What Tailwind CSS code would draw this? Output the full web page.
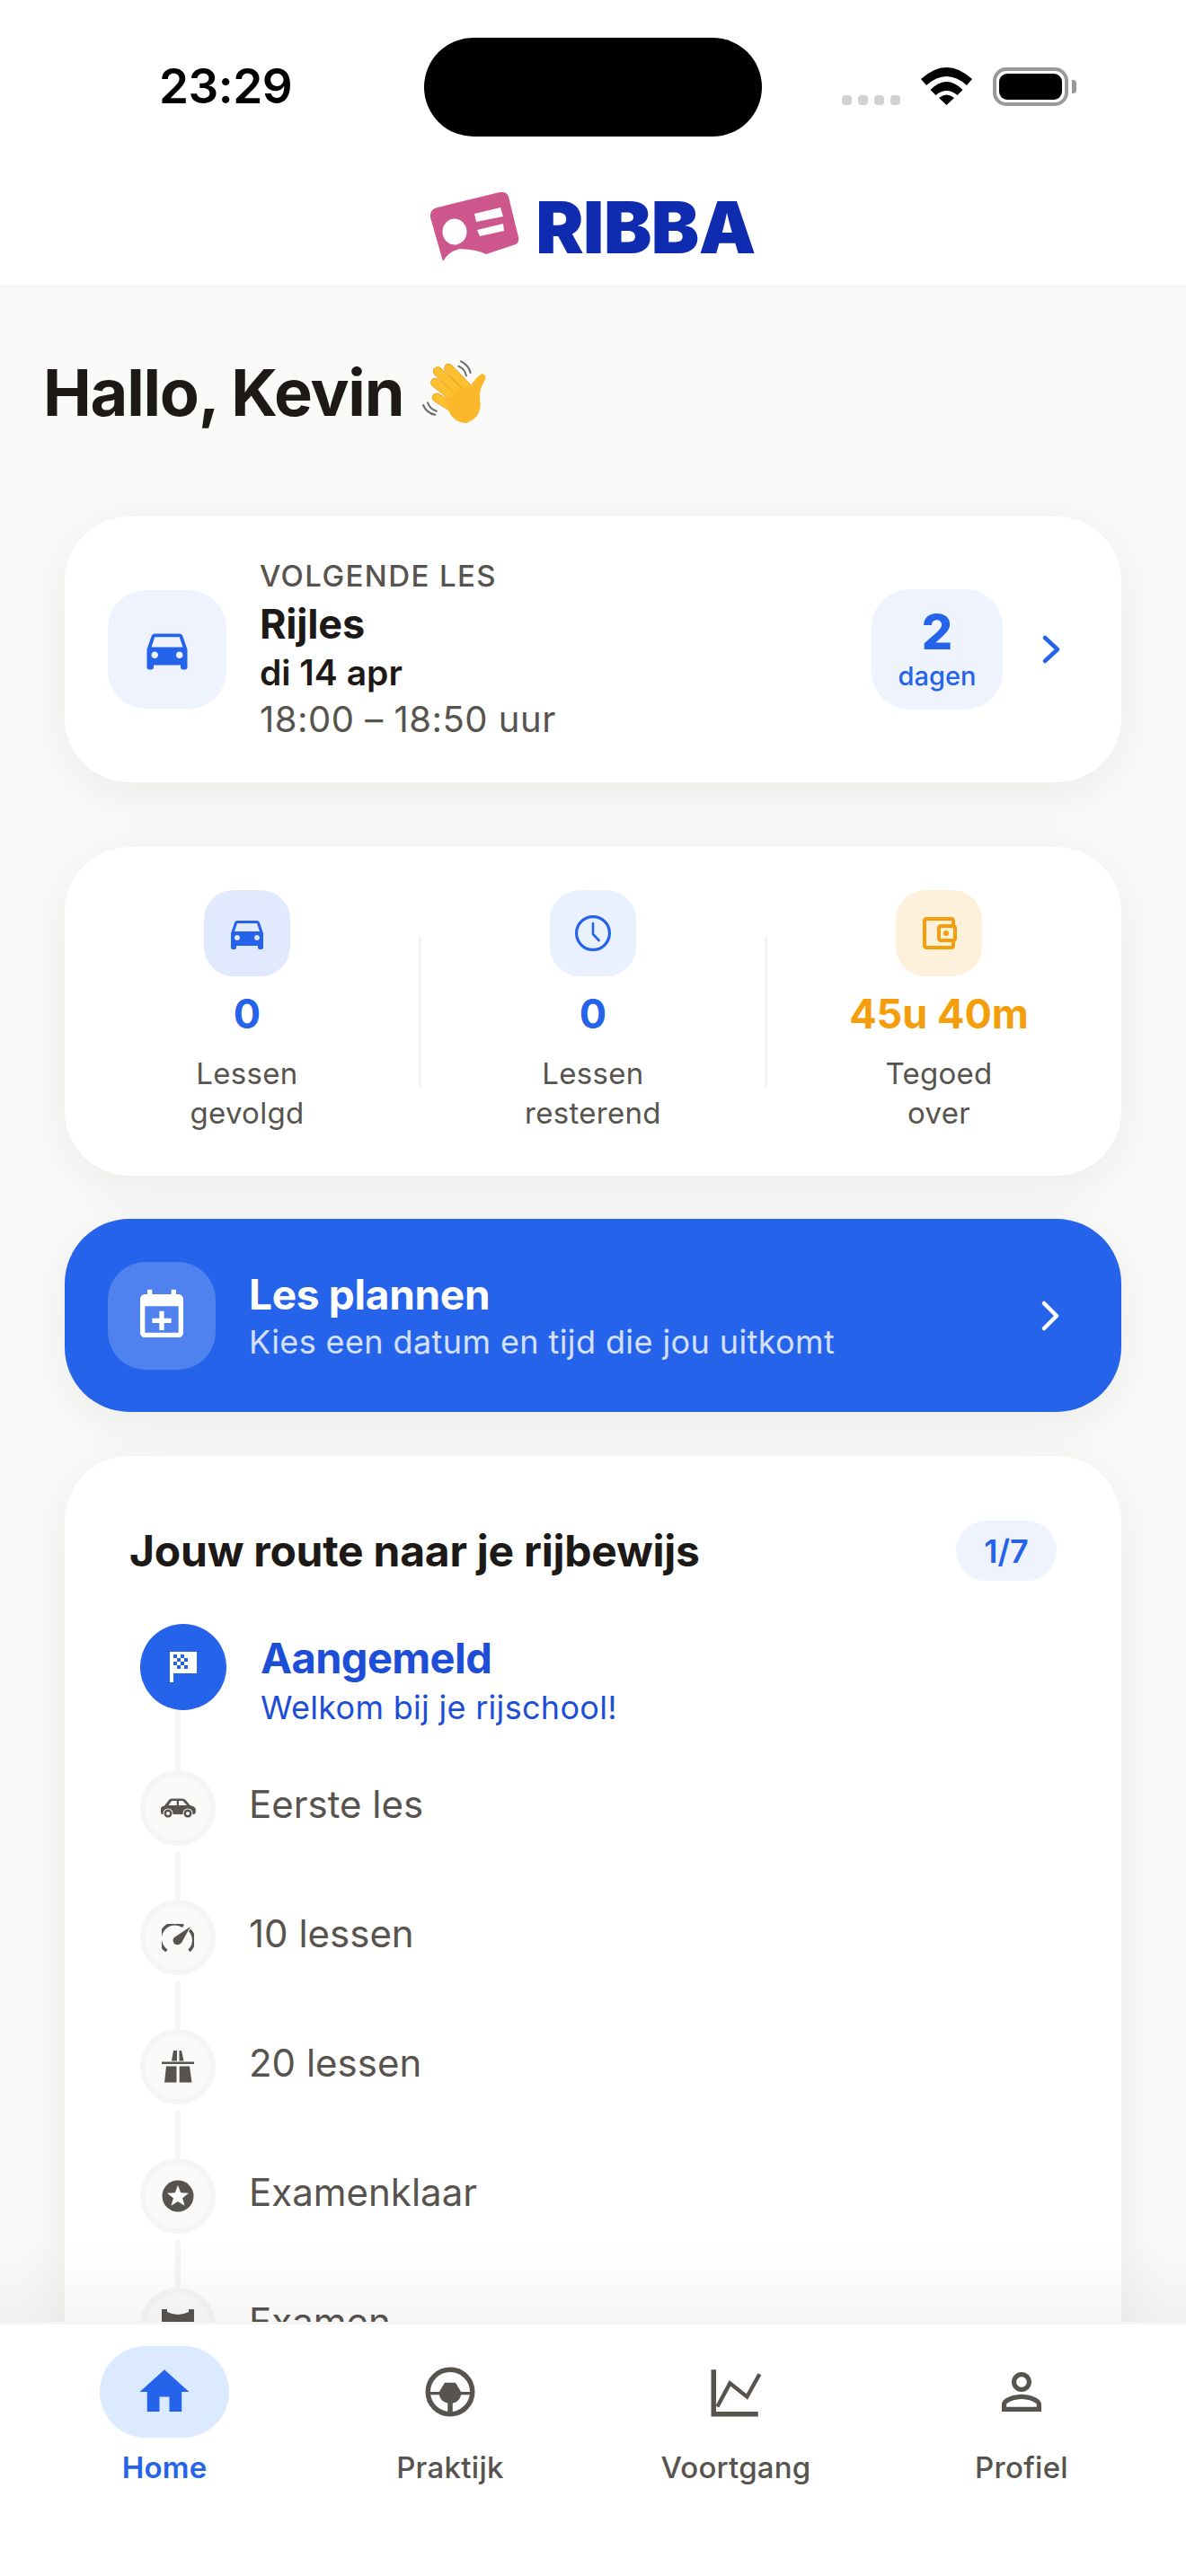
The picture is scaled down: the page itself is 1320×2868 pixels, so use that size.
<!DOCTYPE html>
<html lang="nl">
<head>
  <meta charset="UTF-8">
  <title>Ribba</title>
  <script src="https://cdn.jsdelivr.net/npm/@tailwindcss/browser@4"></script>
</head>
<body class="bg-[#fafaf9] font-['Inter',sans-serif]">
  <div class="relative w-[1320px] h-[2868px] overflow-hidden flex flex-col">

    <!-- Status bar + logo -->
    <header class="bg-white h-[320px] shrink-0 border-b-[3px] border-[#f5f5f4]">
      <div class="relative h-[194px] flex items-start">
        <span class="ml-[177px] mt-[68px] text-[53px] leading-[57px] font-semibold text-black tracking-[-0.5px]">23:29</span>
        <div class="absolute left-[472px] top-[42px] w-[376px] h-[110px] rounded-full bg-black"></div>
        <div class="absolute left-[937px] top-[106px] flex gap-[7px]">
          <i class="block w-[11px] h-[11px] rounded-[4px] bg-[#d1d1d1]"></i>
          <i class="block w-[11px] h-[11px] rounded-[4px] bg-[#d1d1d1]"></i>
          <i class="block w-[11px] h-[11px] rounded-[4px] bg-[#d1d1d1]"></i>
          <i class="block w-[11px] h-[11px] rounded-[4px] bg-[#d1d1d1]"></i>
        </div>
        <svg class="absolute left-[1025px] top-[75px]" width="57" height="42" viewBox="0 0 57 42">
          <path d="M0 13Q28.5-13 57 13L51 20Q28.5 0 6 20Z"/>
          <path d="M10.5 25Q28.5 7 46.5 25L40.5 31Q28.5 21 16.5 31Z"/>
          <path d="M20 34Q28.5 27 37 34L28.5 42Z"/>
        </svg>
        <div class="absolute left-[1105px] top-[75px] w-[84px] h-[43px] rounded-[15px] border-[4px] border-[#999] p-[3px]">
          <div class="w-full h-full rounded-[9px] bg-black"></div>
        </div>
        <div class="absolute left-[1193px] top-[89px] w-[5px] h-[15px] rounded-r-[4px] bg-[#999]"></div>
      </div>
      <div class="flex justify-center items-center gap-[18px] h-[80px] mt-[19px]">
        <svg width="99" height="78" viewBox="0 0 99 78">
          <path fill="#cd568c" d="M8 17L77 0Q85-1 87 5L98 50Q99 56 95 58L62 69Q53 64 33 63Q20 66 14 77L0 28Q-1 19 8 17Z"/>
          <ellipse cx="27" cy="44" rx="13.5" ry="14.5" fill="#fff"/>
          <path fill="#fff" d="M49 24L78 17L81 27L51 33ZM52 42L81 35L82 43L55 49Z"/>
        </svg>
        <span class="text-[80px] leading-[80px] font-black text-[#0f2bb0] tracking-[-0.5px]">RIBBA</span>
      </div>
    </header>

    <!-- Scrollable content -->
    <main class="relative flex-1 overflow-hidden">
      <div class="flex items-center mt-[73px] mb-[94px] h-[88px] ml-[48px]">
        <h1 class="text-[72px] leading-[88px] font-bold text-[#1c1917] tracking-[-1.2px]">Hallo, Kevin</h1>
        <svg class="ml-[2px] -mt-[3px]" width="110" height="90" viewBox="0 0 330 270">
          <g fill="none" stroke="#6b6b6b" stroke-width="6" stroke-linecap="round">
            <path d="M178 50Q200 60 204 82"/>
            <path d="M186 34Q212 46 218 72"/>
            <path d="M75 172Q84 195 105 200"/>
            <path d="M60 180Q72 208 100 212"/>
          </g>
          <g fill="none" stroke-linecap="round">
            <path d="M220 135L145 57" stroke="#e39a1a" stroke-width="31"/>
            <path d="M190 145L108 67" stroke="#e39a1a" stroke-width="31"/>
            <path d="M175 165L100 105" stroke="#e39a1a" stroke-width="31"/>
            <path d="M170 195L105 155" stroke="#e39a1a" stroke-width="31"/>
            <path d="M220 135L145 57" stroke="#fdc02f" stroke-width="27"/>
            <path d="M190 145L108 67" stroke="#fdc02f" stroke-width="27"/>
            <path d="M175 165L100 105" stroke="#fdc02f" stroke-width="27"/>
            <path d="M170 195L105 155" stroke="#fdc02f" stroke-width="27"/>
          </g>
          <path fill="#fbb82a" d="M135 170L180 125L215 122Q232 90 256 75Q275 80 265 100Q245 130 250 165Q258 220 205 240Q170 240 150 210Z"/>
        </svg>
      </div>

      <div class="flex flex-col px-[72px]">
        <!-- Next lesson -->
        <section class="flex items-center h-[296px] pl-[48px] pr-[65px] rounded-[72px] bg-white shadow-[0_12px_60px_rgba(0,0,0,0.065)]">
          <div class="flex items-center justify-center w-[132px] h-[132px] rounded-[42px] bg-[#eef3fe] shrink-0">
            <svg width="60" height="60" viewBox="0 0 24 24" fill="#2563eb"><path d="M18.92 6.01C18.72 5.42 18.16 5 17.5 5h-11c-.66 0-1.21.42-1.42 1.01L3 12v8c0 .55.45 1 1 1h1c.55 0 1-.45 1-1v-1h12v1c0 .55.45 1 1 1h1c.55 0 1-.45 1-1v-8l-2.08-5.99zM6.5 16c-.83 0-1.5-.67-1.5-1.5S5.67 13 6.5 13s1.5.67 1.5 1.5S7.33 16 6.5 16zm11 0c-.83 0-1.5-.67-1.5-1.5s.67-1.5 1.5-1.5 1.5.67 1.5 1.5-.67 1.5-1.5 1.5zM5 11l1.5-4.5h11L19 11H5z"/></svg>
          </div>
          <div class="flex-1 ml-[37px]">
            <p class="text-[33px] leading-[42px] font-medium text-[#57534e] tracking-[1.4px]">VOLGENDE LES</p>
            <p class="text-[45px] leading-[58px] mt-[4px] font-bold text-[#1c1917] tracking-[-0.2px]">Rijles</p>
            <p class="text-[39px] leading-[50px] font-semibold text-[#1c1917]">di 14 apr</p>
            <p class="text-[40px] leading-[50px] mt-[2px] text-[#57534e] tracking-[0.5px]">18:00 – 18:50 uur</p>
          </div>
          <div class="flex flex-col items-center justify-center w-[146px] h-[134px] rounded-[42px] bg-[#eef3fe] text-[#2563eb]">
            <span class="text-[54px] leading-[60px] font-extrabold">2</span>
            <span class="text-[29px] leading-[38px] font-medium">dagen</span>
          </div>
          <svg class="ml-[41px]" width="26" height="36" viewBox="0 0 26 36" fill="none" stroke="#2563eb" stroke-width="4.5" stroke-linecap="round" stroke-linejoin="round"><path d="M6 5L20 18L6 31"/></svg>
        </section>

        <!-- Stats -->
        <section class="flex items-center h-[366px] mt-[72px] px-[12px] rounded-[72px] bg-white shadow-[0_12px_60px_rgba(0,0,0,0.065)]">
          <div class="flex-1 flex flex-col items-center">
            <div class="flex items-center justify-center w-[96px] h-[96px] rounded-[33px] bg-[#e0e9fd]">
              <svg width="48" height="48" viewBox="0 0 24 24" fill="#2563eb"><path d="M18.92 6.01C18.72 5.42 18.16 5 17.5 5h-11c-.66 0-1.21.42-1.42 1.01L3 12v8c0 .55.45 1 1 1h1c.55 0 1-.45 1-1v-1h12v1c0 .55.45 1 1 1h1c.55 0 1-.45 1-1v-8l-2.08-5.99zM6.5 16c-.83 0-1.5-.67-1.5-1.5S5.67 13 6.5 13s1.5.67 1.5 1.5S7.33 16 6.5 16zm11 0c-.83 0-1.5-.67-1.5-1.5s.67-1.5 1.5-1.5 1.5.67 1.5 1.5-.67 1.5-1.5 1.5zM5 11l1.5-4.5h11L19 11H5z"/></svg>
            </div>
            <p class="mt-[12px] text-[45px] leading-[60px] font-bold text-[#2563eb]">0</p>
            <p class="mt-[14px] text-[33px] leading-[44px] tracking-[0.3px] text-[#57534e] text-center">Lessen<br>gevolgd</p>
          </div>
          <div class="w-[3px] h-[168px] bg-[#f5f5f4]"></div>
          <div class="flex-1 flex flex-col items-center">
            <div class="flex items-center justify-center w-[96px] h-[96px] rounded-[33px] bg-[#e9f0fe]">
              <svg width="48" height="48" viewBox="0 0 24 24" fill="none" stroke="#2563eb" stroke-linecap="round" stroke-linejoin="round"><circle cx="12" cy="12" r="9.2" stroke-width="1.6"/><path d="M12 6.5V12.5L15.3 16" stroke-width="1.3"/></svg>
            </div>
            <p class="mt-[12px] text-[45px] leading-[60px] font-bold text-[#2563eb]">0</p>
            <p class="mt-[14px] text-[33px] leading-[44px] tracking-[0.3px] text-[#57534e] text-center">Lessen<br>resterend</p>
          </div>
          <div class="w-[3px] h-[168px] bg-[#f5f5f4]"></div>
          <div class="flex-1 flex flex-col items-center">
            <div class="flex items-center justify-center w-[96px] h-[96px] rounded-[33px] bg-[#fdf1dc]">
              <svg width="48" height="48" viewBox="0 0 24 24" fill="#f59e0b"><path d="M21 7.28V5c0-1.1-.9-2-2-2H5c-1.11 0-2 .9-2 2v14c0 1.1.89 2 2 2h14c1.1 0 2-.9 2-2v-2.28c.59-.35 1-.98 1-1.72V9c0-.74-.41-1.37-1-1.72zM20 9v6h-7V9h7zM5 19V5h14v2h-6c-1.1 0-2 .9-2 2v6c0 1.1.9 2 2 2h6v2H5z"/><circle cx="16" cy="12" r="1.5"/></svg>
            </div>
            <p class="mt-[12px] text-[45px] leading-[60px] font-bold text-[#f59e0b]">45u 40m</p>
            <p class="mt-[14px] text-[33px] leading-[44px] tracking-[0.3px] text-[#57534e] text-center">Tegoed<br>over</p>
          </div>
        </section>

        <!-- Plan a lesson -->
        <section class="flex items-center h-[215px] mt-[48px] pl-[48px] pr-[66px] rounded-[72px] bg-[#2563eb] shadow-[0_12px_60px_rgba(0,0,0,0.065)]">
          <div class="flex items-center justify-center w-[120px] h-[120px] rounded-[42px] bg-white/20 shrink-0">
            <svg width="64" height="64" viewBox="0 0 24 24" fill="#fff"><path d="M19 3h-1V1h-2v2H8V1H6v2H5c-1.11 0-2 .9-2 2v14c0 1.1.89 2 2 2h14c1.1 0 2-.9 2-2V5c0-1.1-.9-2-2-2zm0 16H5V8h14v11z"/><path d="M13 10h-2v3H8v2h3v3h2v-3h3v-2h-3z"/></svg>
          </div>
          <div class="flex-1 ml-[37px]">
            <p class="text-[46px] leading-[58px] font-bold text-white tracking-[-0.3px]">Les plannen</p>
            <p class="text-[36px] leading-[48px] tracking-[0.4px] text-white/80">Kies een datum en tijd die jou uitkomt</p>
          </div>
          <svg width="26" height="38" viewBox="0 0 26 38" fill="none" stroke="#fff" stroke-width="4.5" stroke-linecap="round" stroke-linejoin="round"><path d="M6 5L20 19L6 33"/></svg>
        </section>

        <!-- Route -->
        <section class="h-[1100px] mt-[49px] p-[72px] rounded-[72px] bg-white shadow-[0_12px_60px_rgba(0,0,0,0.065)]">
          <div class="flex items-center justify-between h-[67px] mb-[48px]">
            <h2 class="text-[48px] leading-[60px] font-bold text-[#1c1917] tracking-[-0.25px]">Jouw route naar je rijbewijs</h2>
            <span class="flex items-center justify-center w-[112px] h-[67px] rounded-full bg-[#eef3fe] text-[36px] font-semibold text-[#2563eb]">1/7</span>
          </div>

          <div class="flex">
            <div class="flex flex-col items-start w-[108px]">
              <div class="flex items-center justify-center ml-[12px] w-[96px] h-[96px] rounded-full bg-[#2563eb]">
                <svg width="30" height="34" viewBox="0 0 30 34">
                  <path fill="#fff" d="M0 0H30V24H4V34H0Z"/>
                  <path fill="#2563eb" d="M4 3H8V7H4ZM12 3H16V7H12ZM8 7H12V11H8ZM16 7H20V11H16ZM4 11H8V15H4ZM12 11H16V15H12ZM8 15H12V19H8ZM16 15H20V19H16Z"/>
                </svg>
              </div>
              <div class="ml-[51px] w-[6px] h-[67px] bg-[#f5f5f4]"></div>
            </div>
            <div class="ml-[38px] mt-[8px]">
              <p class="text-[47px] leading-[60px] font-bold text-[#1d4ed8] tracking-[-0.6px]">Aangemeld</p>
              <p class="text-[36px] leading-[46px] mt-[2px] tracking-[0.3px] text-[#1d4ed8]">Welkom bij je rijschool!</p>
            </div>
          </div>

          <div class="flex">
            <div class="flex flex-col items-center w-[108px]">
              <div class="flex items-center justify-center w-[84px] h-[84px] rounded-full bg-[#fafaf9] border-[6px] border-[#f5f5f4]">
                <svg width="40" height="22" viewBox="0 0 40 22">
                  <path fill="#57534e" d="M1 12Q1 9 5 8.5L10 2Q11 0.5 13 0.5H25Q27 0.5 29 2.5L33.5 8Q39 9 39.8 12V16Q39.5 18 37 18H3Q1 18 1 16Z"/>
                  <path fill="#fafaf9" d="M13 3H18.7V8H9.5ZM21 3H25.5L30 8H21Z"/>
                  <circle cx="9" cy="17" r="5.5" fill="#fafaf9"/><circle cx="9" cy="17" r="4.5" fill="#57534e"/><circle cx="9" cy="17" r="2" fill="#fafaf9"/>
                  <circle cx="31" cy="17" r="5.5" fill="#fafaf9"/><circle cx="31" cy="17" r="4.5" fill="#57534e"/><circle cx="31" cy="17" r="2" fill="#fafaf9"/>
                </svg>
              </div>
              <div class="w-[6px] h-[54px] mt-[6px] rounded-full bg-[#f5f5f4]"></div>
            </div>
            <p class="ml-[25px] mt-[8px] text-[42px] leading-[60px] text-[#57534e]">Eerste les</p>
          </div>

          <div class="flex">
            <div class="flex flex-col items-center w-[108px]">
              <div class="flex items-center justify-center w-[84px] h-[84px] rounded-full bg-[#fafaf9] border-[6px] border-[#f5f5f4]">
                <svg width="36" height="31" viewBox="0 0 36 31">
                  <path fill="none" stroke="#57534e" stroke-width="3.5" d="M5.5 30A16 16 0 0 1 24 2.5M30 6A16 16 0 0 1 30.5 30"/>
                  <path fill="#57534e" stroke="#fafaf9" stroke-width="2" paint-order="stroke" d="M32 3L22 21Q18 25 14 22Q11 18 14 15Z"/>
                </svg>
              </div>
              <div class="w-[6px] h-[54px] mt-[6px] rounded-full bg-[#f5f5f4]"></div>
            </div>
            <p class="ml-[25px] mt-[8px] text-[42px] leading-[60px] text-[#57534e]">10 lessen</p>
          </div>

          <div class="flex">
            <div class="flex flex-col items-center w-[108px]">
              <div class="flex items-center justify-center w-[84px] h-[84px] rounded-full bg-[#fafaf9] border-[6px] border-[#f5f5f4]">
                <svg width="36" height="36" viewBox="0 0 36 36" fill="#57534e">
                  <path d="M13 0H17V11.5H11ZM19.5 0H22L24.5 11.5H19.5ZM0 12.5H36V15H0ZM5 17.5H16.5V35.5H3ZM19.7 17.5H31L33.5 35.5H19.7Z"/>
                </svg>
              </div>
              <div class="w-[6px] h-[54px] mt-[6px] rounded-full bg-[#f5f5f4]"></div>
            </div>
            <p class="ml-[25px] mt-[8px] text-[42px] leading-[60px] text-[#57534e]">20 lessen</p>
          </div>

          <div class="flex">
            <div class="flex flex-col items-center w-[108px]">
              <div class="flex items-center justify-center w-[84px] h-[84px] rounded-full bg-[#fafaf9] border-[6px] border-[#f5f5f4]">
                <svg width="36" height="36" viewBox="0 0 36 36">
                  <circle cx="18" cy="18" r="17.5" fill="#57534e"/>
                  <path fill="#fff" d="M18 6L21.2 14.3L30 14.7L23.1 20.2L25.5 28.8L18 24L10.5 28.8L12.9 20.2L6 14.7L14.8 14.3Z"/>
                </svg>
              </div>
              <div class="w-[6px] h-[54px] mt-[6px] rounded-full bg-[#f5f5f4]"></div>
            </div>
            <p class="ml-[25px] mt-[8px] text-[42px] leading-[60px] text-[#57534e]">Examenklaar</p>
          </div>

          <div class="flex">
            <div class="flex flex-col items-center w-[108px]">
              <div class="flex items-center justify-center w-[84px] h-[84px] rounded-full bg-[#fafaf9] border-[6px] border-[#f5f5f4]">
                <svg width="36" height="36" viewBox="0 0 36 36" fill="#57534e"><path d="M0 0H6V3Q18 9 30 3V0H36V36H0Z"/></svg>
              </div>
            </div>
            <p class="ml-[25px] mt-[8px] text-[42px] leading-[60px] text-[#57534e]">Examen</p>
          </div>
        </section>
      </div>

      <!-- fade above tab bar -->
      <div class="absolute left-0 right-0 bottom-0 h-[90px] bg-linear-to-b from-transparent to-black/[0.035]"></div>
    </main>

    <!-- Tab bar -->
    <nav class="shrink-0 h-[283px] flex items-start px-[24px] pt-[24px] bg-white border-t-[3px] border-[#f5f5f4]">
      <div class="flex-1 flex flex-col items-center">
        <div class="flex items-center justify-center w-[144px] h-[102px] rounded-full bg-[#dbeafe]">
          <svg width="66" height="66" viewBox="0 0 24 24" fill="#2563eb"><path d="M10 20v-6h4v6h5v-8h3L12 3 2 12h3v8z"/></svg>
        </div>
        <span class="mt-[11px] text-[33px] leading-[44px] tracking-[0.2px] font-semibold text-[#2563eb]">Home</span>
      </div>
      <div class="flex-1 flex flex-col items-center">
        <div class="flex items-center justify-center w-[144px] h-[102px]">
          <svg width="66" height="66" viewBox="0 0 24 24" fill="#57534e">
            <circle cx="12" cy="12" r="9" fill="none" stroke="#57534e" stroke-width="2"/>
            <path d="M9.8 8.3h4.4l2.2 3.7H21v1.200h-4.600c-.4 2-1.600 3-3.400 3.300V21h-2v-4.500c-1.800-.3-3-1.300-3.400-3.300H3V12h4.600z"/>
          </svg>
        </div>
        <span class="mt-[11px] text-[33px] leading-[44px] tracking-[0.3px] font-medium text-[#57534e]">Praktijk</span>
      </div>
      <div class="flex-1 flex flex-col items-center">
        <div class="flex items-center justify-center w-[144px] h-[102px]">
          <svg width="66" height="66" viewBox="0 0 24 24" fill="none" stroke="#57534e">
            <path d="M3 3V21H21" stroke-width="2"/>
            <path d="M4.5 18L9.6 8.5L16.5 14L21.6 4.8" stroke-width="1.6"/>
          </svg>
        </div>
        <span class="mt-[11px] text-[33px] leading-[44px] tracking-[0.2px] font-medium text-[#57534e]">Voortgang</span>
      </div>
      <div class="flex-1 flex flex-col items-center">
        <div class="flex items-center justify-center w-[144px] h-[102px]">
          <svg width="66" height="66" viewBox="0 0 24 24" fill="#57534e"><path d="M12 5.9c1.16 0 2.1.94 2.1 2.1s-.94 2.1-2.1 2.1S9.9 9.16 9.9 8s.94-2.1 2.1-2.1m0 9c2.97 0 6.1 1.46 6.1 2.1v1.1H5.9V17c0-.64 3.13-2.1 6.1-2.1M12 4C9.79 4 8 5.79 8 8s1.79 4 4 4 4-1.79 4-4-1.79-4-4-4zm0 9c-2.67 0-8 1.34-8 4v3h16v-3c0-2.66-5.33-4-8-4z"/></svg>
        </div>
        <span class="mt-[11px] text-[33px] leading-[44px] tracking-[0.3px] font-medium text-[#57534e]">Profiel</span>
      </div>
    </nav>
  </div>
</body>
</html>
